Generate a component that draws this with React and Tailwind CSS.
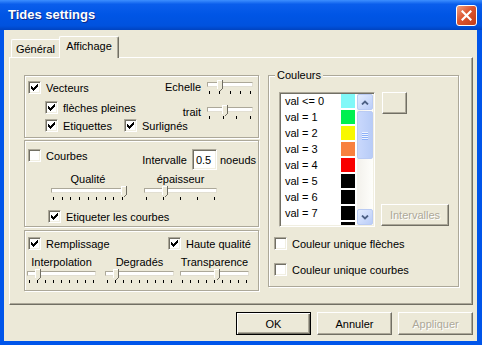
import React from 'react';

// classic 7x7 check glyph
const CHECK = [
  [6, 0], [5, 1], [6, 1], [0, 2], [4, 2], [5, 2], [6, 2],
  [0, 3], [1, 3], [3, 3], [4, 3], [5, 3], [0, 4], [1, 4], [2, 4], [3, 4], [4, 4],
  [1, 5], [2, 5], [3, 5], [2, 6],
];

const raised = 'border border-t-white border-l-white border-b-[#716F64] border-r-[#716F64] shadow-[inset_-1px_-1px_0_#ACA899]';
const sunken = 'border border-t-[#ACA899] border-l-[#ACA899] border-b-white border-r-white shadow-[inset_1px_1px_0_#716F64,inset_-1px_-1px_0_#F1EFE2]';
const etched = 'border border-[#ACA899] shadow-[inset_1px_1px_0_#fff,1px_1px_0_#fff]';

const Check = ({ on }) => (
  <span className={`relative block w-[13px] h-[13px] shrink-0 bg-white ${sunken}`}>
    {on && (
      <svg className="absolute left-[2px] top-[2px]" width="7" height="7" shapeRendering="crispEdges">
        {CHECK.map(([x, y]) => <rect key={`${x}-${y}`} x={x} y={y} width="1" height="1" fill="#000" />)}
      </svg>
    )}
  </span>
);

const CheckRow = ({ on, label, className = '' }) => (
  <div className={`flex items-center h-[13px] ${className}`}>
    <Check on={on} />
    <span className="ml-[5px] whitespace-nowrap">{label}</span>
  </div>
);

const Slider = ({ className, thumb, ticks }) => (
  <div className={`relative h-[14px] shrink-0 ${className}`}>
    <div className="mt-[2px] h-[5px] bg-white border border-t-[#ACA899] border-l-[#ACA899] border-b-[#E2DFD2] border-r-[#E2DFD2]" />
    <div className="mt-[4px] flex justify-between px-[2px]">
      {Array.from({ length: ticks }).map((_, i) => (
        <span key={i} className="block w-px h-[3px] bg-black" />
      ))}
    </div>
    <svg className="absolute top-0" style={{ left: thumb }} width="6" height="11" shapeRendering="crispEdges">
      <path d="M0 0H6V8L3 11L0 8Z" fill="#ECE9D8" />
      <path d="M0.5 8.5V0.5H5" stroke="#fff" fill="none" />
      <path d="M5.5 0V8.5L3 11" stroke="#716F64" fill="none" />
    </svg>
  </div>
);

const SliderCol = ({ label, w, thumb, ticks, className = '' }) => (
  <div className={`flex flex-col ${w} ${className}`}>
    <span className="h-[14px] text-center whitespace-nowrap">{label}</span>
    <Slider className={w} thumb={thumb} ticks={ticks} />
  </div>
);

const colours = [
  ['val <= 0', 'bg-[#80F8F8]'],
  ['val = 1', 'bg-[#00F050]'],
  ['val = 2', 'bg-[#F8F800]'],
  ['val = 3', 'bg-[#F88040]'],
  ['val = 4', 'bg-[#F80000]'],
  ['val = 5', 'bg-black'],
  ['val = 6', 'bg-black'],
  ['val = 7', 'bg-black'],
  ['val = 8', 'bg-black'],
];

const scrollBtn = 'w-[16px] h-[16px] rounded-[2px] border border-[#BACBF3] bg-[linear-gradient(135deg,#E3ECFE,#BACDF8)] flex items-center justify-center';

const Button = ({ children, isDefault, disabled, className = '' }) => (
  <div
    className={`flex items-center justify-center bg-[#ECE9D8] ${
      isDefault
        ? 'border border-black shadow-[inset_1px_1px_0_#fff,inset_-1px_-1px_0_#716F64,inset_-2px_-2px_0_#ACA899]'
        : raised
    } ${disabled ? 'text-[#ACA899] [text-shadow:1px_1px_0_#fff]' : ''} ${className}`}
  >
    {children}
  </div>
);

export default function App() {
  return (
    <div className="w-[482px] h-[345px] flex flex-col bg-[#0055EA] font-['Liberation_Sans',Arial,sans-serif] text-[11px] leading-[14px] text-black select-none">
      {/* title bar */}
      <div className="h-[30px] shrink-0 flex items-center pl-[8px] pr-[5px] bg-[linear-gradient(to_bottom,#3D8FFF_0%,#0A5EEC_14%,#0055E5_50%,#0052DE_86%,#0043C0_100%)]">
        <span className="font-bold text-[13px] text-white [text-shadow:1px_1px_0_#0B2A8A]">Tides settings</span>
        <div className="ml-auto w-[21px] h-[21px] rounded-[3px] border border-white bg-[linear-gradient(135deg,#F0A080,#DD5530_45%,#C23D18)] flex items-center justify-center">
          <svg width="11" height="11" viewBox="0 0 11 11">
            <path d="M1.5 1.5L9.5 9.5M9.5 1.5L1.5 9.5" stroke="#fff" strokeWidth="2.2" strokeLinecap="square" />
          </svg>
        </div>
      </div>

      {/* body */}
      <div className="flex-1 ml-[4px] mr-[5px] mb-[4px] bg-[#ECE9D8] flex flex-col">
        {/* tabs */}
        <div className="mt-[6px] h-[21px] pl-[7px] flex items-end">
          <div className="w-[48px] h-[18px] border-l border-t border-white rounded-tl-[2px] flex items-center justify-center pt-[1px]">Général</div>
          <div className="relative z-10 -mb-px w-[60px] h-[22px] bg-[#ECE9D8] border-l border-t border-white border-r border-r-[#716F64] rounded-t-[2px] shadow-[inset_-1px_0_0_#ACA899] flex items-start justify-center pt-[2px]">Affichage</div>
        </div>

        {/* tab panel */}
        <div className="ml-[5px] w-[464px] h-[248px] border border-t-white border-l-white border-b-[#716F64] border-r-[#716F64] shadow-[inset_-1px_-1px_0_#ACA899] flex pl-[14px] pt-[17px]">
          <div className="flex flex-col w-[236px]">
            {/* vecteurs */}
            <div className={`w-[235px] h-[63px] flex ${etched}`}>
              <div className="flex-1 min-w-0 pl-[3px] pt-[5px] flex flex-col">
                <CheckRow on label="Vecteurs" />
                <CheckRow on label="flèches pleines" className="mt-[7px] ml-[17px]" />
                <div className="flex mt-[5px] ml-[17px]">
                  <CheckRow on label="Etiquettes" className="w-[79px] shrink-0" />
                  <CheckRow on label="Surlignés" />
                </div>
              </div>
              <div className="shrink-0 pr-[5px] pt-[4px] flex flex-col items-end">
                <div className="flex items-start">
                  <span className="mr-[6px]">Echelle</span>
                  <Slider className="w-[46px]" thumb={10} ticks={5} />
                </div>
                <div className="flex items-start mt-[11px]">
                  <span className="mr-[6px]">trait</span>
                  <Slider className="w-[46px]" thumb={15} ticks={4} />
                </div>
              </div>
            </div>

            {/* courbes */}
            <div className={`mt-[2px] w-[235px] h-[87px] flex flex-col ${etched}`}>
              <div className="mt-[8px] ml-[3px] pr-[2px] flex items-start">
                <CheckRow on={false} label="Courbes" />
                <div className="ml-auto h-[21px] flex items-center">
                  <span>Intervalle</span>
                  <div className={`ml-[5px] w-[25px] h-[21px] bg-white flex items-center pl-[3px] ${sunken}`}>0.5</div>
                  <span className="ml-[3px]">noeuds</span>
                </div>
              </div>
              <div className="mt-[2px] ml-[26px] flex">
                <SliderCol label="Qualité" w="w-[74px]" thumb={70} ticks={9} />
                <SliderCol label="épaisseur" w="w-[73px]" thumb={18} ticks={5} className="ml-[19px]" />
              </div>
              <CheckRow on label="Etiqueter les courbes" className="mt-[10px] ml-[23px]" />
            </div>

            {/* remplissage */}
            <div className={`mt-[3px] w-[235px] h-[61px] flex flex-col ${etched}`}>
              <div className="mt-[6px] ml-[3px] flex">
                <CheckRow on label="Remplissage" className="w-[140px]" />
                <CheckRow on label="Haute qualité" />
              </div>
              <div className="mt-[5px] ml-[2px] flex">
                <SliderCol label="Interpolation" w="w-[69px]" thumb={8} ticks={9} />
                <SliderCol label="Degradés" w="w-[69px]" thumb={8} ticks={9} className="ml-[9px]" />
                <SliderCol label="Transparence" w="w-[69px]" thumb={34} ticks={9} className="ml-[6px]" />
              </div>
            </div>
          </div>

          {/* couleurs */}
          <div className={`relative ml-[8px] w-[191px] h-[212px] pl-[10px] pt-[16px] flex flex-col ${etched}`}>
            <span className="absolute left-[6px] top-[-8px] px-[2px] bg-[#ECE9D8]">Couleurs</span>
            <div className="flex">
              <div className={`w-[96px] h-[135px] p-px bg-white flex ${sunken}`}>
                <div className="w-[76px] overflow-hidden">
                  <div className="-mt-px">
                    {colours.map(([label, bg]) => (
                      <div key={label} className="h-[16px] flex items-center justify-between pl-[4px] pr-[2px]">
                        <span>{label}</span>
                        <span className={`block w-[14px] h-[14px] ${bg}`} />
                      </div>
                    ))}
                  </div>
                </div>
                <div className="w-[16px] flex flex-col bg-[linear-gradient(to_right,#F3F1EC,#FEFEFB)]">
                  <div className={scrollBtn}>
                    <svg width="8" height="5" viewBox="0 0 8 5">
                      <path d="M1 4.5L4 1.5L7 4.5" stroke="#4D6185" strokeWidth="1.8" fill="none" />
                    </svg>
                  </div>
                  <div className="mt-[1px] w-[16px] h-[48px] rounded-[2px] border border-[#BACBF3] bg-[linear-gradient(to_right,#C9D8FC,#B8CCF7)] flex flex-col items-center justify-center gap-[1px]">
                    {[0, 1, 2, 3].map((i) => (
                      <span key={i} className="block w-[6px] h-px bg-[#EEF4FE] shadow-[0_1px_0_#8CB0F8]" />
                    ))}
                  </div>
                  <div className={`mt-auto ${scrollBtn}`}>
                    <svg width="8" height="5" viewBox="0 0 8 5">
                      <path d="M1 0.5L4 3.5L7 0.5" stroke="#4D6185" strokeWidth="1.8" fill="none" />
                    </svg>
                  </div>
                </div>
              </div>
              <div className="ml-[6px] h-[135px] flex flex-col justify-between">
                <Button className="ml-px w-[25px] h-[22px]" />
                <Button disabled className="w-[68px] h-[22px] mb-px">Intervalles</Button>
              </div>
            </div>
            <CheckRow on={false} label="Couleur unique flèches" className="mt-[10px] ml-[-5px]" />
            <CheckRow on={false} label="Couleur unique courbes" className="mt-[13px] ml-[-5px]" />
          </div>
        </div>

        {/* dialog buttons */}
        <div className="mt-[7px] pr-[4px] flex justify-end gap-[6px]">
          <Button isDefault className="w-[75px] h-[23px]">OK</Button>
          <Button className="w-[75px] h-[23px]">Annuler</Button>
          <Button disabled className="w-[75px] h-[23px]">Appliquer</Button>
        </div>
      </div>
    </div>
  );
}
